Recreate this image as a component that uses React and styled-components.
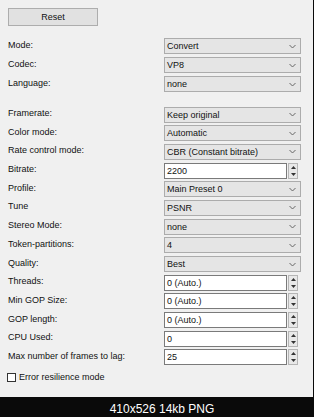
import React from "react";
import styled, { createGlobalStyle } from "styled-components";

const Global = createGlobalStyle`
  html, body { margin: 0; padding: 0; background: #0a0a0a; }
  body { font-family: "Liberation Sans", Arial, sans-serif; }
`;

const Frame = styled.div`
  width: 314px;
  height: 417px;
  background: #0a0a0a;
  display: flex;
  flex-direction: column;
`;

const Panel = styled.div`
  width: 313px;
  height: 401px;
  box-sizing: border-box;
  background: #f0f0f0;
  padding: 8px 0 0 8px;
  display: flex;
  flex-direction: column;
  font-size: 9px;
  color: #111;
`;

const ResetButton = styled.button`
  width: 90px;
  height: 18px;
  box-sizing: border-box;
  background: #e1e1e1;
  border: 1px solid #adadad;
  font-family: inherit;
  font-size: 9px;
  color: #111;
  padding: 0;
  margin: 0;
`;

const Group = styled.div`
  display: flex;
  flex-direction: column;
  gap: ${(p) => p.$gap}px;
  margin-top: ${(p) => p.$top}px;
`;

const Row = styled.div`
  display: grid;
  grid-template-columns: 156px 137px;
  align-items: center;
  height: 16px;
`;

const Label = styled.span`
  white-space: nowrap;
  line-height: 16px;
  margin-top: -3px;
`;

const Combo = styled.div`
  height: 16px;
  box-sizing: border-box;
  background: #e5e5e5;
  border: 1px solid #acacac;
  display: flex;
  align-items: center;
  justify-content: space-between;
  padding: 0 4px 0 2px;
`;

const Spin = styled.div`
  height: 16px;
  display: flex;
  align-items: stretch;
`;

const SpinInput = styled.div`
  width: 123px;
  box-sizing: border-box;
  background: #fff;
  border: 1px solid #7a7a7a;
  display: flex;
  align-items: center;
  padding-left: 2px;
`;

const SpinButtons = styled.div`
  width: 10px;
  margin-left: 1px;
  box-sizing: border-box;
  background: #e8e8e8;
  border: 1px solid #b5b5b5;
  display: flex;
  flex-direction: column;
  align-items: center;
  justify-content: space-around;
`;

const Check = styled.label`
  display: flex;
  align-items: center;
  gap: 3px;
  margin-top: 7px;
  margin-left: -1px;
`;

const Box = styled.span`
  width: 9px;
  height: 9px;
  box-sizing: border-box;
  border: 1px solid #333;
  background: #fff;
`;

const Caption = styled.div`
  flex: 1;
  color: #fff;
  font-size: 12px;
  text-align: center;
  line-height: 16px;
  padding-left: 10px;
  padding-top: 4px;
`;

const Chevron = () => (
  <svg width="7" height="5" viewBox="0 0 7 5">
    <polyline points="0.5,1 3.5,4 6.5,1" fill="none" stroke="#666" strokeWidth="1" />
  </svg>
);

const Arrows = () => (
  <>
    <svg width="5" height="3" viewBox="0 0 5 3">
      <polygon points="0,3 2.5,0 5,3" fill="#333" />
    </svg>
    <svg width="5" height="3" viewBox="0 0 5 3">
      <polygon points="0,0 2.5,3 5,0" fill="#333" />
    </svg>
  </>
);

const group1 = [
  ["Mode:", "combo", "Convert"],
  ["Codec:", "combo", "VP8"],
  ["Language:", "combo", "none"],
];

const group2 = [
  ["Framerate:", "combo", "Keep original"],
  ["Color mode:", "combo", "Automatic"],
  ["Rate control mode:", "combo", "CBR (Constant bitrate)"],
  ["Bitrate:", "spin", "2200"],
  ["Profile:", "combo", "Main Preset 0"],
  ["Tune", "combo", "PSNR"],
  ["Stereo Mode:", "combo", "none"],
  ["Token-partitions:", "combo", "4"],
  ["Quality:", "combo", "Best"],
  ["Threads:", "spin", "0 (Auto.)"],
  ["Min GOP Size:", "spin", "0 (Auto.)"],
  ["GOP length:", "spin", "0 (Auto.)"],
  ["CPU Used:", "spin", "0"],
  ["Max number of frames to lag:", "spin", "25"],
];

const Field = ({ label, kind, value }) => (
  <Row>
    <Label>{label}</Label>
    {kind === "combo" ? (
      <Combo>
        <span>{value}</span>
        <Chevron />
      </Combo>
    ) : (
      <Spin>
        <SpinInput>{value}</SpinInput>
        <SpinButtons>
          <Arrows />
        </SpinButtons>
      </Spin>
    )}
  </Row>
);

export default function App() {
  return (
    <Frame>
      <Global />
      <Panel>
        <ResetButton>Reset</ResetButton>
        <Group $gap={3} $top={12}>
          {group1.map(([l, k, v]) => (
            <Field key={l} label={l} kind={k} value={v} />
          ))}
        </Group>
        <Group $gap={2.7} $top={14.5}>
          {group2.map(([l, k, v]) => (
            <Field key={l} label={l} kind={k} value={v} />
          ))}
        </Group>
        <Check>
          <Box />
          <span>Error resilience mode</span>
        </Check>
      </Panel>
      <Caption>410x526 14kb PNG</Caption>
    </Frame>
  );
}
